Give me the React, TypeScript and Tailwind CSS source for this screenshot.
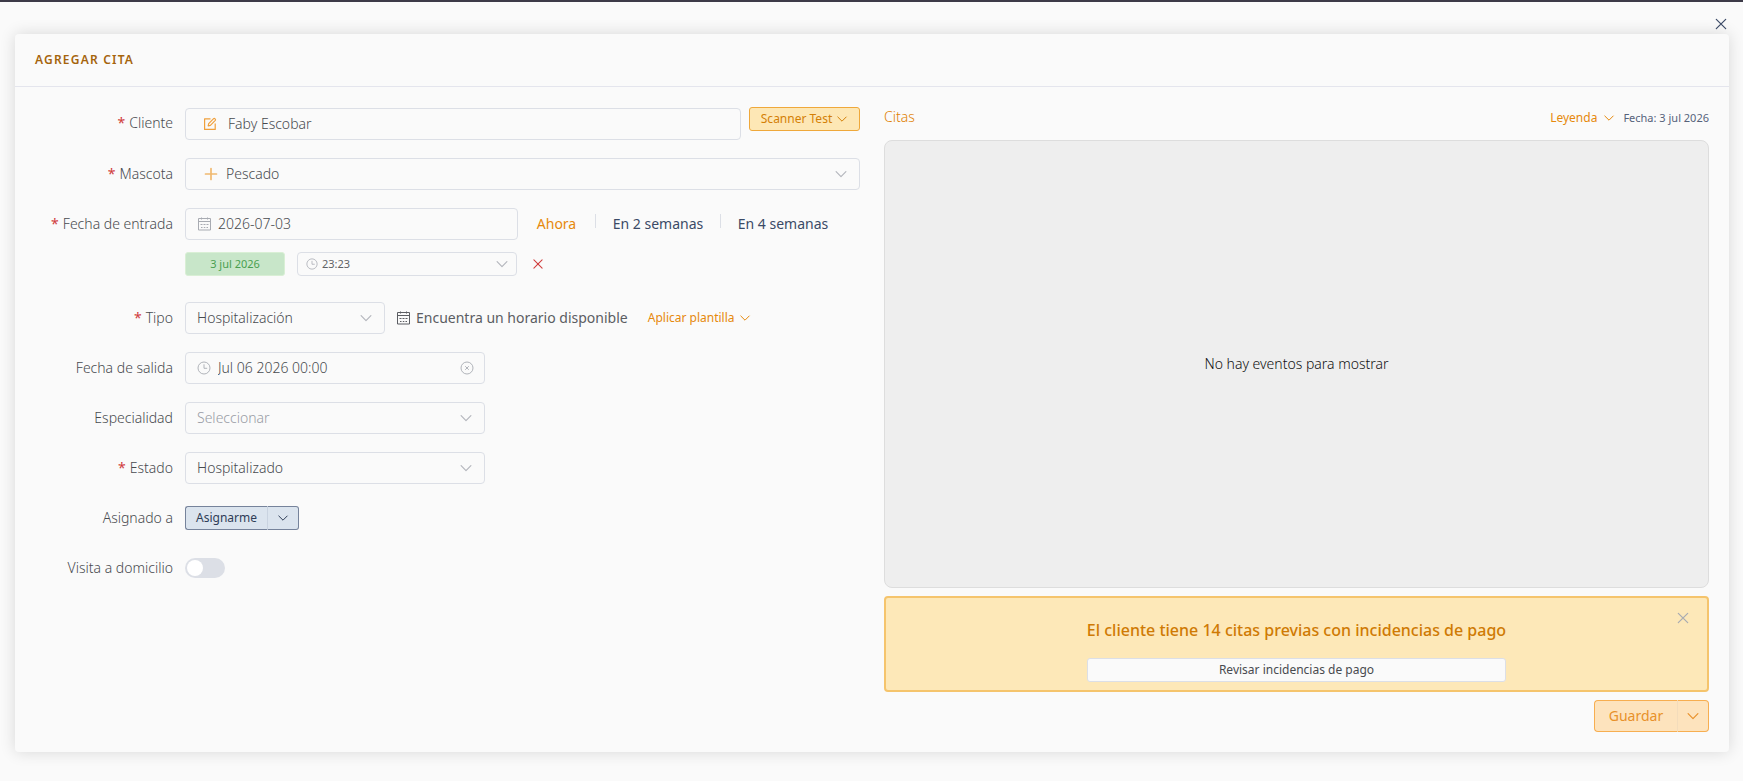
import { useState } from "react";
import type { ReactNode } from "react";

type IconProps = { className?: string };

function ChevronIcon({ className = "size-3" }: IconProps) {
  return (
    <svg viewBox="0 0 12 12" className={`shrink-0 ${className}`} fill="none" stroke="currentColor" strokeLinecap="round" strokeLinejoin="round" aria-hidden="true">
      <path d="M1.8 4 6 8.2 10.2 4" />
    </svg>
  );
}

function CloseIcon({ className = "size-4" }: IconProps) {
  return (
    <svg viewBox="0 0 16 16" className={`shrink-0 ${className}`} fill="none" stroke="currentColor" strokeWidth="1.2" strokeLinecap="round" aria-hidden="true">
      <path d="m3.3 3.3 9.4 9.4M12.7 3.3l-9.4 9.4" />
    </svg>
  );
}

function CalendarIcon({ className = "size-3.5" }: IconProps) {
  return (
    <svg viewBox="0 0 14 14" className={`shrink-0 ${className}`} fill="none" stroke="currentColor" aria-hidden="true">
      <path d="M1.5 1.5h12v11.5h-12zM1.5 4.5h12M4.5 .5v2M10.5 .5v2" />
      <path d="M3.5 7.5h2M6.5 7.5h2M9.5 7.5h2M4 10.5h1.5M6.8 10.5h1.5M9.5 10.5h1.5" />
    </svg>
  );
}

function ClockIcon({ className = "size-3.5" }: IconProps) {
  return (
    <svg viewBox="0 0 14 14" className={`shrink-0 ${className}`} fill="none" stroke="currentColor" strokeWidth="0.9" aria-hidden="true">
      <circle cx="7" cy="7" r="6" />
      <path d="M7 3.3v4h3.2" />
    </svg>
  );
}

function ClearIcon({ className = "size-3.5" }: IconProps) {
  return (
    <svg viewBox="0 0 14 14" className={`shrink-0 ${className}`} fill="none" stroke="currentColor" strokeWidth="0.9" aria-hidden="true">
      <circle cx="7" cy="7" r="6" />
      <path d="m5.2 5.2 3.6 3.6M8.8 5.2 5.2 8.8" />
    </svg>
  );
}

function EditIcon({ className = "size-3.5" }: IconProps) {
  return (
    <svg viewBox="0 0 14 14" className={`shrink-0 ${className}`} fill="none" stroke="currentColor" strokeWidth="1.2" strokeLinejoin="round" aria-hidden="true">
      <path d="M7.5 1.8H1.6v10.6h10.6V6.6" />
      <path d="m5.2 8.9.5-2.3 4.9-4.9c.9-.8 2.5.8 1.7 1.7L7.4 8.3z" />
    </svg>
  );
}

function PlusIcon({ className = "size-3.5" }: IconProps) {
  return (
    <svg viewBox="0 0 14 14" className={`shrink-0 ${className}`} fill="none" stroke="currentColor" strokeWidth="1.7" strokeLinecap="round" aria-hidden="true">
      <path d="M7 1.5v11M1.5 7h11" />
    </svg>
  );
}

function Row({ label, htmlFor, required = false, children }: { label: string; htmlFor: string; required?: boolean; children: ReactNode }) {
  return (
    <div className="flex items-start">
      <label htmlFor={htmlFor} className="w-[150px] shrink-0 pr-3 text-right leading-8">
        {required && <span className="mr-1 font-normal text-[#d03c3c]">*</span>}
        {label}
      </label>
      <div className="min-w-0 flex-1">{children}</div>
    </div>
  );
}

const box = "flex items-center rounded border border-[#dcdfe6] bg-[#fafafa]";

function Select({ id, value, icon, width = "", placeholder = false }: { id: string; value: string; icon?: ReactNode; width?: string; placeholder?: boolean }) {
  return (
    <div className={`${box} h-8 ${width}`}>
      {icon}
      <select
        id={id}
        className={`h-full min-w-0 flex-1 appearance-none bg-transparent outline-none ${icon ? "pl-2" : "pl-[11px]"} ${placeholder ? "text-[#999ca5]" : ""}`}
      >
        <option>{value}</option>
      </select>
      <ChevronIcon className="pointer-events-none mr-[11px] size-3.5 text-[#b4b6bd]" />
    </div>
  );
}

export default function App() {
  const [homeVisit, setHomeVisit] = useState(false);

  return (
    <div className="min-h-screen border-t-2 border-[#3d3a48] bg-[#fafafa] pr-3.5 pb-7 pl-[15px] font-['Noto_Sans',sans-serif] text-sm font-light text-[#484a4f]">
      <div className="flex h-8 items-end justify-end pb-0.5">
        <button type="button" aria-label="Cerrar" className="text-[#3b4a66]">
          <CloseIcon />
        </button>
      </div>

      <main className="rounded bg-[#fafafa] shadow-[0_0_16px_rgba(0,0,0,0.14)]">
        <header className="flex h-[53px] items-center border-b border-[#e4e5ed] px-5">
          <h1 className="text-xs font-semibold tracking-widest text-[#a5640c]">AGREGAR CITA</h1>
        </header>

        <div className="grid grid-cols-2 gap-6 p-5">
          <form className="flex flex-col gap-[18px]" onSubmit={(e) => e.preventDefault()}>
            <Row label="Cliente" htmlFor="cliente" required>
              <div className="flex h-[33px] gap-2">
                <div className={`${box} h-8 flex-1 self-end`}>
                  <button type="button" aria-label="Editar cliente" className="ml-[17px] text-[#f0a03c]">
                    <EditIcon />
                  </button>
                  <input id="cliente" defaultValue="Faby Escobar" className="min-w-0 flex-1 bg-transparent pl-[11px] outline-none" />
                </div>
                <button type="button" className="flex h-6 w-[111px] items-center justify-center gap-1 rounded-[3px] border border-[#efa83a] bg-[#fde7b5] text-xs font-normal text-[#d47f06]">
                  Scanner Test
                  <ChevronIcon />
                </button>
              </div>
            </Row>

            <Row label="Mascota" htmlFor="mascota" required>
              <Select
                id="mascota"
                value="Pescado"
                icon={
                  <button type="button" aria-label="Agregar mascota" className="ml-[18px] text-[#f0b970]">
                    <PlusIcon />
                  </button>
                }
              />
            </Row>

            <Row label="Fecha de entrada" htmlFor="entrada" required>
              <div className="flex items-center">
                <div className={`${box} h-8 w-[333px]`}>
                  <CalendarIcon className="ml-[11px] size-3.5 text-[#a8abb2]" />
                  <input id="entrada" defaultValue="2026-07-03" className="min-w-0 flex-1 bg-transparent pl-[7px] outline-none" />
                </div>
                <div className="flex items-center font-normal whitespace-nowrap text-[#3b4a66]">
                  <button type="button" className="w-[77px] text-[#e6890c]">Ahora</button>
                  <span className="mb-1.5 h-3.5 w-px bg-[#dcdfe6]" />
                  <button type="button" className="w-[124px]">En 2 semanas</button>
                  <span className="mb-1.5 h-3.5 w-px bg-[#dcdfe6]" />
                  <button type="button" className="w-[124px]">En 4 semanas</button>
                </div>
              </div>
              <div className="mt-3 mb-2 flex items-center gap-3 text-[11px]">
                <span className="flex h-6 w-[100px] items-center justify-center rounded-[3px] border border-[#d9efd5] bg-[#c8e6c9] font-normal text-[#4a9f50]">3 jul 2026</span>
                <div className={`${box} h-6 w-[220px]`}>
                  <ClockIcon className="ml-2 size-3 text-[#a8abb2]" />
                  <select aria-label="Hora de entrada" className="h-full min-w-0 flex-1 appearance-none bg-transparent pl-1 font-normal text-[#606266] outline-none">
                    <option>23:23</option>
                  </select>
                  <ChevronIcon className="pointer-events-none mr-[7px] size-3.5 text-[#b4b6bd]" />
                </div>
                <button type="button" aria-label="Quitar hora" className="ml-0.5 text-[#d03c3c]">
                  <CloseIcon className="size-3.5" />
                </button>
              </div>
            </Row>

            <Row label="Tipo" htmlFor="tipo" required>
              <div className="flex items-center whitespace-nowrap">
                <Select id="tipo" value="Hospitalización" width="w-[200px]" />
                <button type="button" className="ml-[11px] flex items-center gap-1.5 font-normal text-[#5b5d62]">
                  <CalendarIcon />
                  Encuentra un horario disponible
                </button>
                <button type="button" className="ml-5 flex items-center gap-1 text-xs font-normal text-[#e6890c]">
                  Aplicar plantilla
                  <ChevronIcon />
                </button>
              </div>
            </Row>

            <Row label="Fecha de salida" htmlFor="salida">
              <div className={`${box} h-8 w-[300px]`}>
                <ClockIcon className="ml-[11px] size-3.5 text-[#a8abb2]" />
                <input id="salida" defaultValue="Jul 06 2026 00:00" className="min-w-0 flex-1 bg-transparent pl-[7px] outline-none" />
                <button type="button" aria-label="Borrar fecha de salida" className="mr-2.5 text-[#a8abb2]">
                  <ClearIcon />
                </button>
              </div>
            </Row>

            <Row label="Especialidad" htmlFor="especialidad">
              <Select id="especialidad" value="Seleccionar" width="w-[300px]" placeholder />
            </Row>

            <Row label="Estado" htmlFor="estado" required>
              <Select id="estado" value="Hospitalizado" width="w-[300px]" />
            </Row>

            <Row label="Asignado a" htmlFor="asignado">
              <div className="flex h-8 items-center text-xs font-normal text-[#2f3d57]">
                <button id="asignado" type="button" className="h-6 w-[82px] rounded-l-[3px] border border-r-0 border-[#76839b] bg-[#dbe4ee]">Asignarme</button>
                <button type="button" aria-label="Más opciones de asignación" className="flex h-6 w-8 items-center justify-center rounded-r-[3px] border border-[#76839b] border-l-[#c9d3e0] bg-[#dbe4ee]">
                  <ChevronIcon />
                </button>
              </div>
            </Row>

            <Row label="Visita a domicilio" htmlFor="visita">
              <div className="flex h-8 items-center">
                <input
                  id="visita"
                  type="checkbox"
                  role="switch"
                  checked={homeVisit}
                  onChange={(e) => setHomeVisit(e.target.checked)}
                  className="h-5 w-10 appearance-none rounded-full bg-[#dcdfe6] p-0.5 before:block before:size-4 before:rounded-full before:bg-white checked:bg-[#e6890c] checked:before:ml-5"
                />
              </div>
            </Row>
          </form>

          <section className="flex flex-col gap-2">
            <div className="flex h-[25px] items-start justify-between">
              <h2 className="leading-5 text-[#e07f00]">Citas</h2>
              <div className="flex items-center gap-2 leading-[22px]">
                <button type="button" className="flex items-center gap-1.5 text-xs leading-[22px] font-normal text-[#e6890c]">
                  Leyenda
                  <ChevronIcon />
                </button>
                <span className="text-[11px] font-normal text-[#56627a]">Fecha: 3 jul 2026</span>
              </div>
            </div>

            <div className="flex h-[448px] items-center justify-center rounded-lg border border-[#dddddd] bg-[#eeeeee] text-[#111111]">No hay eventos para mostrar</div>

            <div role="alert" className="relative flex h-24 flex-col items-center rounded border-2 border-[#f5c46c] bg-[#fde8b8] pt-5">
              <div className="flex flex-col gap-4">
                <strong className="text-base leading-6 font-medium text-[#cf7a04]">El cliente tiene 14 citas previas con incidencias de pago</strong>
                <button type="button" className="h-6 rounded-[3px] border border-[#dcdfe6] bg-[#fafafa] text-xs font-normal">Revisar incidencias de pago</button>
              </div>
              <button type="button" aria-label="Cerrar aviso" className="absolute top-3 right-4 text-[#a8abb2]">
                <CloseIcon />
              </button>
            </div>

            <div className="flex h-8 justify-end font-normal text-[#e8912a]">
              <button type="submit" className="w-[83px] rounded-l border border-r-0 border-[#f7ae50] bg-[#fde3bd]">Guardar</button>
              <button type="button" aria-label="Más opciones de guardado" className="flex w-8 items-center justify-center rounded-r border border-[#f7ae50] border-l-[#f3dcbb] bg-[#fde3bd]">
                <ChevronIcon className="size-3.5" />
              </button>
            </div>
          </section>
        </div>
      </main>
    </div>
  );
}
